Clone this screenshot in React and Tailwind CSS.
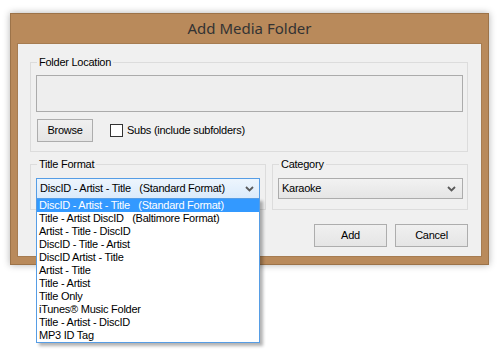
import React from "react";

const formats = [
  "DiscID - Artist - Title   (Standard Format)",
  "Title - Artist DiscID   (Baltimore Format)",
  "Artist - Title - DiscID",
  "DiscID - Title - Artist",
  "DiscID Artist - Title",
  "Artist - Title",
  "Title - Artist",
  "Title Only",
  "iTunes® Music Folder",
  "Title - Artist - DiscID",
  "MP3 ID Tag",
];

function Chevron() {
  return (
    <svg width="9" height="6" viewBox="0 0 9 6" className="shrink-0">
      <path d="M1 1 L4.5 4.5 L8 1" fill="none" stroke="#5a5a5a" strokeWidth="1.8" />
    </svg>
  );
}

function GroupBox({ label, className, children }) {
  return (
    <div className={`relative border border-[#dcdcdc] ${className}`}>
      <span className="absolute -top-[7px] left-[6px] bg-[#f0f0f0] px-[2px] leading-[13px] text-[#000]">
        {label}
      </span>
      {children}
    </div>
  );
}

function Button({ children, className }) {
  return (
    <div
      className={`flex items-center justify-center border border-[#adadad] bg-gradient-to-b from-[#f0f0f0] to-[#e5e5e5] ${className}`}
    >
      {children}
    </div>
  );
}

export default function App() {
  return (
    <div
      className="relative h-[354px] w-[501px] overflow-hidden bg-white pl-[10px] pt-[13px] text-[11px] tracking-[-0.25px] text-black"
      style={{ fontFamily: '"Liberation Sans", Arial, sans-serif' }}
    >
      <div className="flex h-[252px] w-[479px] flex-col border border-[#9c7349] bg-[#b98a5b] shadow-[0_0_7px_rgba(0,0,0,0.3)]">
        <div
          className="flex h-[29px] items-center justify-center text-[15px] tracking-normal text-[#333]"
          style={{ fontFamily: '"Noto Sans", "Open Sans", sans-serif' }}
        >
          Add Media Folder
        </div>
        <div className="mx-[6px] h-[214px] border border-[#a67c51] bg-[#f0f0f0] pl-[12px] pt-[18px]">
          <GroupBox label="Folder Location" className="h-[90px] w-[438px] pl-[5px] pt-[12px]">
            <div className="h-[37px] w-[427px] border border-[#ababab] bg-[#eeeeee]" />
            <div className="mt-[7px] flex items-center">
              <Button className="ml-[1px] h-[23px] w-[56px]">Browse</Button>
              <div className="ml-[17px] h-[13px] w-[13px] border border-[#333] bg-white" />
              <span className="ml-[4px]">Subs (include subfolders)</span>
            </div>
          </GroupBox>

          <div className="mt-[12px] flex">
            <GroupBox label="Title Format" className="h-[46px] w-[236px] pl-[5px] pt-[13px]">
              <div className="relative w-[224px]">
                <div className="flex h-[21px] items-center justify-between border border-[#569de5] bg-gradient-to-b from-[#edf5fd] to-[#dbebfb] pl-[3px] pr-[5px]">
                  <span className="whitespace-pre">{formats[0]}</span>
                  <Chevron />
                </div>
                <div className="absolute left-0 top-[20px] z-10 w-[224px] border border-[#569de5] bg-white shadow-[3px_3px_3px_rgba(0,0,0,0.3)]">
                  {formats.map((f, i) => (
                    <div
                      key={f}
                      className={`h-[13px] whitespace-pre pl-[2px] leading-[13px] ${
                        i === 0 ? "bg-[#3399ff] text-white" : "text-black"
                      }`}
                    >
                      {f}
                    </div>
                  ))}
                </div>
              </div>
            </GroupBox>
            <GroupBox label="Category" className="ml-[6px] h-[46px] w-[196px] pl-[5px] pt-[13px]">
              <div className="flex h-[21px] w-[185px] items-center justify-between border border-[#acacac] bg-gradient-to-b from-[#f2f2f2] to-[#e5e5e5] pl-[3px] pr-[6px]">
                <span>Karaoke</span>
                <Chevron />
              </div>
            </GroupBox>
          </div>

          <div className="mt-[14px] flex w-[438px] justify-end gap-[8px]">
            <Button className="h-[23px] w-[73px]">Add</Button>
            <Button className="h-[23px] w-[73px]">Cancel</Button>
          </div>
        </div>
      </div>
    </div>
  );
}
